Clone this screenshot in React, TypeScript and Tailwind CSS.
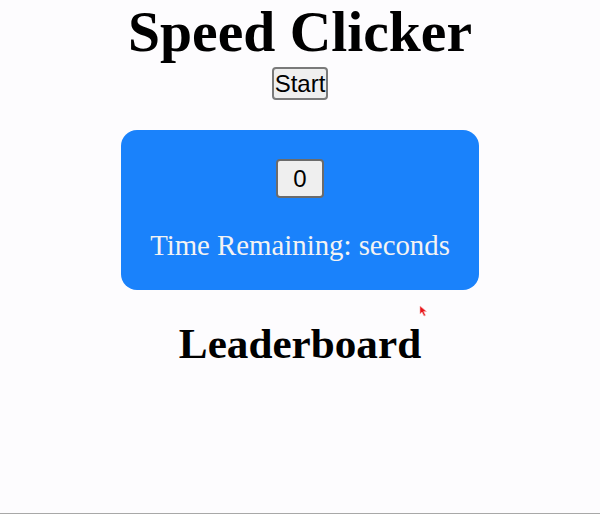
import { useState } from 'react'

export default function App() {
  const [clicks, setClicks] = useState(0)

  return (
    <div className="relative flex min-h-[514px] flex-col items-center border-b border-[#a8a8a8] bg-[#fdfcfe] font-['Liberation_Serif',serif] text-black">
      <h1 className="h-[64px] text-[57.6px] font-bold leading-[64px]">Speed Clicker</h1>
      <button className="mt-[3px] flex h-[33px] w-[56px] items-center justify-center rounded-[4px] border-2 border-[#7a7a7a] bg-[#efefef] font-['Liberation_Sans',Arial,sans-serif] text-[24px] leading-none">
        Start
      </button>

      <div className="mt-[30px] flex h-[160px] w-[358px] flex-col items-center rounded-[16px] bg-[#1a82fb] pt-[29px]">
        <button
          className="flex h-[39px] w-[48px] items-center justify-center rounded-[4px] border-2 border-[#6b6b6b] bg-[#efefef] font-['Liberation_Sans',Arial,sans-serif] text-[24px] leading-none"
          onClick={() => setClicks(clicks + 1)}
        >
          {clicks}
        </button>
        <p className="mt-[31px] text-[28.8px] leading-[32px] text-[#f3f3f3]">Time Remaining: seconds</p>
      </div>

      <h2 className="mt-[30px] text-[43.2px] font-bold leading-[48px]">Leaderboard</h2>

      {/* recorded mouse pointer */}
      <svg className="absolute left-[419px] top-[305px] h-[12px] w-[9px]" viewBox="0 0 9 12">
        <path d="M1 1 L1 9 L3 7 L5 11 L6.5 10.3 L4.6 6.5 L7.5 6.5 Z" fill="#e8141a" stroke="#f6b0b0" strokeWidth="0.6" />
      </svg>
    </div>
  )
}
